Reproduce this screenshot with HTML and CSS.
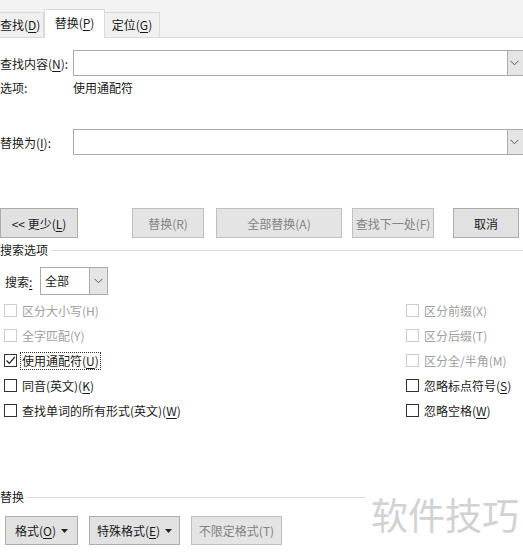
FILE: index.html
```html
<!DOCTYPE html>
<html lang="zh-CN">
<head>
<meta charset="utf-8">
<title>查找和替换</title>
<link rel="stylesheet" href="styles.css">
</head>
<body>
<div class="dialog">
  <div class="tabs">
    <div class="tab t1">查找(<u>D</u>)</div>
    <div class="tab active">替换(<u>P</u>)</div>
    <div class="tab t3">定位(<u>G</u>)</div>
  </div>

  <div class="row find-row">
    <div class="label">查找内容(<u>N</u>):</div>
    <div class="combo">
      <div class="combo-field"></div>
      <div class="combo-btn"><svg width="9" height="6" viewBox="0 0 9 6"><polyline points="0.5,0.8 4.5,4.8 8.5,0.8" fill="none" stroke="#555" stroke-width="1"/></svg></div>
    </div>
  </div>
  <div class="row opt-row">
    <div class="label">选项:</div>
    <div class="opt-val">使用通配符</div>
  </div>

  <div class="row repl-row">
    <div class="label">替换为(<u>I</u>):</div>
    <div class="combo">
      <div class="combo-field"></div>
      <div class="combo-btn"><svg width="9" height="6" viewBox="0 0 9 6"><polyline points="0.5,0.8 4.5,4.8 8.5,0.8" fill="none" stroke="#555" stroke-width="1"/></svg></div>
    </div>
  </div>

  <div class="btn-row">
    <div class="btn b-less">&lt;&lt; 更少(<u>L</u>)</div>
    <div class="btn disabled b-repl">替换(R)</div>
    <div class="btn disabled b-all">全部替换(A)</div>
    <div class="btn disabled b-next">查找下一处(F)</div>
    <div class="btn b-cancel">取消</div>
  </div>

  <div class="section s-search">
    <span class="sec-label">搜索选项</span>
    <span class="sec-line"></span>
  </div>

  <div class="search-row">
    <span class="search-label">搜索<u>:</u></span>
    <div class="select">
      <div class="select-val">全部</div>
      <div class="select-btn"><svg width="9" height="6" viewBox="0 0 9 6"><polyline points="0.5,0.8 4.5,4.8 8.5,0.8" fill="none" stroke="#555" stroke-width="1"/></svg></div>
    </div>
  </div>

  <div class="checks">
    <div class="chk disabled"><span class="box"></span><span class="txt">区分大小写(H)</span></div>
    <div class="chk disabled"><span class="box"></span><span class="txt">区分前缀(X)</span></div>
    <div class="chk disabled"><span class="box"></span><span class="txt">全字匹配(Y)</span></div>
    <div class="chk disabled"><span class="box"></span><span class="txt">区分后缀(T)</span></div>
    <div class="chk"><span class="box"><svg width="11" height="11" viewBox="0 0 11 11"><polyline points="1.5,5.5 4.3,8.3 9.8,2" fill="none" stroke="#222" stroke-width="1.2"/></svg></span><span class="txt focus">使用通配符(<u>U</u>)</span></div>
    <div class="chk disabled"><span class="box"></span><span class="txt">区分全/半角(M)</span></div>
    <div class="chk"><span class="box"></span><span class="txt">同音(英文)(<u>K</u>)</span></div>
    <div class="chk"><span class="box"></span><span class="txt">忽略标点符号(<u>S</u>)</span></div>
    <div class="chk"><span class="box"></span><span class="txt">查找单词的所有形式(英文)(<u>W</u>)</span></div>
    <div class="chk"><span class="box"></span><span class="txt">忽略空格(<u>W</u>)</span></div>
  </div>

  <div class="section s-repl">
    <span class="sec-label">替换</span>
    <span class="sec-line"></span>
  </div>

  <div class="btn-row2">
    <div class="btn b-fmt">格式(<u>O</u>)<svg class="tri" width="7" height="4" viewBox="0 0 7 4"><polygon points="0,0 7,0 3.5,4" fill="#222"/></svg></div>
    <div class="btn b-special">特殊格式(<u>E</u>)<svg class="tri" width="7" height="4" viewBox="0 0 7 4"><polygon points="0,0 7,0 3.5,4" fill="#222"/></svg></div>
    <div class="btn disabled b-nofmt">不限定格式(T)</div>
  </div>

  <div class="watermark">软件技巧</div>
</div>
</body>
</html>
```
FILE: styles.css
```css
html, body {
  margin: 0;
  padding: 0;
  background: #fff;
  overflow: hidden;
}
body {
  width: 523px;
  height: 552px;
  font-family: "Noto Sans CJK SC", "Microsoft YaHei", sans-serif;
  font-size: 12px;
  color: #1a1a1a;
}
u {
  text-decoration: underline;
  text-underline-offset: 2px;
  text-decoration-thickness: 1px;
}
.dialog {
  position: relative;
  width: 523px;
  height: 552px;
  overflow: hidden;
}

/* tabs */
.tabs {
  height: 37px;
  background: #f3f3f3;
  border-bottom: 1px solid #d9d9d9;
  display: flex;
  align-items: flex-end;
}
.tab {
  height: 24px;
  line-height: 24px;
  background: #f0f0f0;
  border: 1px solid #d9d9d9;
  border-bottom: none;
  text-align: center;
  box-sizing: content-box;
}
.t1 {
  width: 43px;
  border-left: none;
  text-align: left;
}
.active {
  width: 59px;
  height: 28px;
  line-height: 26px;
  background: #fff;
  margin-bottom: -1px;
  border-color: #d9d9d9;
}
.t3 {
  width: 54px;
  border-left: none;
}

/* rows */
.row {
  display: flex;
  align-items: center;
}
.label {
  width: 73px;
  white-space: nowrap;
}
.find-row {
  margin-top: 12px;
}
.repl-row {
  margin-top: 29px;
}
.combo {
  flex: 1;
  height: 26px;
  box-sizing: border-box;
  border: 1px solid #ababab;
  display: flex;
  margin-right: -6px;
}
.combo-field {
  flex: 1;
}
.combo-btn {
  width: 18px;
  background: #e5e5e5;
  border-left: 1px solid #ababab;
  display: flex;
  align-items: center;
  justify-content: flex-start;
  padding-left: 2px;
}
.opt-row {
  height: 24px;
  line-height: 24px;
}

/* buttons */
.btn {
  height: 30px;
  box-sizing: border-box;
  background: #e1e1e1;
  border: 1px solid #adadad;
  display: flex;
  align-items: center;
  justify-content: center;
  white-space: nowrap;
}
.btn.disabled {
  color: #838383;
  border-color: #bfbfbf;
  background: #e4e4e4;
}
.btn-row {
  margin-top: 53px;
  display: flex;
}
.b-less {
  width: 78px;
}
.b-repl {
  width: 72px;
  margin-left: 54px;
}
.b-all {
  width: 126px;
  margin-left: 12px;
}
.b-next {
  width: 82px;
  margin-left: 10px;
}
.b-cancel {
  width: 66px;
  margin-left: 19px;
}

/* sections */
.section {
  display: flex;
  align-items: center;
  height: 20px;
  line-height: 20px;
}
.sec-label {
  white-space: nowrap;
}
.sec-line {
  flex: 1;
  height: 1px;
  background: #dcdcdc;
  margin-left: 3px;
}
.s-search {
  margin-top: 2px;
}
.s-repl {
  margin-top: 64px;
}

/* search select */
.search-row {
  display: flex;
  align-items: center;
  margin-top: 7px;
  padding-left: 5px;
}
.search-label {
  width: 35px;
}
.select {
  width: 68px;
  height: 28px;
  box-sizing: border-box;
  border: 1px solid #ababab;
  display: flex;
}
.select-val {
  flex: 1;
  padding-left: 4px;
  line-height: 26px;
}
.select-btn {
  width: 17px;
  background: #e5e5e5;
  border-left: 1px solid #ababab;
  display: flex;
  align-items: center;
  justify-content: center;
}

/* checkboxes */
.checks {
  margin-top: 3px;
  display: grid;
  grid-template-columns: 402px 1fr;
  grid-auto-rows: 25px;
  padding-left: 4px;
}
.chk {
  display: flex;
  align-items: center;
  white-space: nowrap;
}
.box {
  width: 13px;
  height: 13px;
  box-sizing: border-box;
  border: 1px solid #333;
  background: #fff;
  margin-right: 5px;
  display: flex;
  align-items: center;
  justify-content: center;
}
.chk.disabled {
  color: #a0a0a0;
}
.chk.disabled .box {
  border-color: #cccccc;
}
.focus {
  outline: 1px dotted #333;
  outline-offset: 0;
  padding: 0 1px;
  margin-left: -1px;
  line-height: 16px;
}

/* second button row */
.btn-row2 {
  display: flex;
  margin-top: 9px;
  padding-left: 5px;
}
.btn-row2 .btn {
  height: 29px;
}
.b-fmt {
  width: 73px;
}
.b-special {
  width: 91px;
  margin-left: 11px;
}
.b-nofmt {
  width: 91px;
  margin-left: 11px;
}
.tri {
  margin-left: 5px;
}

/* watermark overlay */
.watermark {
  position: absolute;
  left: 366px;
  top: 484px;
  width: 157px;
  height: 60px;
  background: #fff;
  color: #d2d2d2;
  font-size: 37px;
  line-height: 60px;
  padding-left: 5px;
  white-space: nowrap;
  overflow: hidden;
  box-sizing: border-box;
}
```
